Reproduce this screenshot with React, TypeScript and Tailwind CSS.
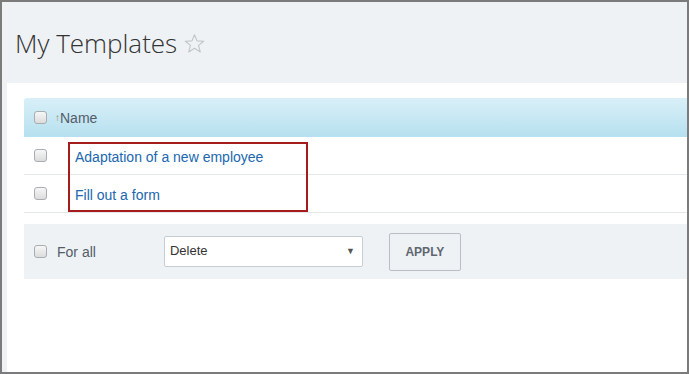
import React from 'react';

function Box() {
  return (
    <span className="inline-block w-[13px] h-[13px] shrink-0 rounded-[3px] border border-[#a9adb1] bg-gradient-to-b from-[#f7f7f7] to-[#dcdcdc]" />
  );
}

const rows = ['Adaptation of a new employee', 'Fill out a form'];

export default function App() {
  return (
    <div className="w-[689px] h-[374px] border-2 border-[#7b7b7b] bg-[#eef2f4] flex flex-col overflow-hidden font-['Liberation_Sans',Arial,sans-serif]">
      <div className="h-[81px] shrink-0 flex items-center pl-[13px]">
        <h1 className="font-['Open_Sans',sans-serif] font-light text-[26px] leading-none text-[#333]">
          My Templates
        </h1>
        <svg className="ml-[7px] mt-[2px]" width="21" height="21" viewBox="0 0 24 24">
          <polygon
            points="12,2 14.9,9 22.5,9.4 16.6,14.2 18.6,21.6 12,17.4 5.4,21.6 7.4,14.2 1.5,9.4 9.1,9"
            fill="none"
            stroke="#c2c6ca"
            strokeWidth="1.3"
            strokeLinejoin="round"
          />
        </svg>
      </div>
      <div className="flex-1 ml-[5px] bg-white pt-[15px] pl-[17px] relative">
        <div className="h-[39px] flex items-center pl-[10px] rounded-tl-[3px] bg-gradient-to-b from-[#d9f0f8] to-[#b6e0ef] text-[14px] text-[#535c69]">
          <Box />
          <span className="ml-[8px] text-[10px] text-[#8a8f5a]">↑</span>
          <span className="mt-[1px]">Name</span>
        </div>
        {rows.map((r) => (
          <div key={r} className="h-[38px] flex items-center pl-[10px] border-b border-[#e4e8ea]">
            <Box />
            <a className="ml-[28px] mt-[3px] text-[14px] text-[#2067b0]">{r}</a>
          </div>
        ))}
        <div className="mt-[11px] h-[55px] bg-[#eef2f4] flex items-center pl-[10px] text-[14px] text-[#535c69]">
          <Box />
          <span className="ml-[10px] mt-[2px]">For all</span>
          <div className="ml-[68px] w-[199px] h-[31px] bg-white border border-[#c6cdd3] rounded-[2px] flex items-center justify-between pl-[5px] pr-[7px] text-[13px] text-[#333]">
            <span className="-mt-[1px]">Delete</span>
            <span className="text-[9px] text-[#555]">▼</span>
          </div>
          <div className="ml-[26px] w-[72px] h-[38px] border border-[#b9bfc4] rounded-[2px] flex items-center justify-center text-[12px] font-bold text-[#5f6670]">
            APPLY
          </div>
        </div>
        <div className="absolute left-[61px] top-[59px] w-[240px] h-[70px] border-2 border-[#a51c1c]" />
      </div>
    </div>
  );
}
